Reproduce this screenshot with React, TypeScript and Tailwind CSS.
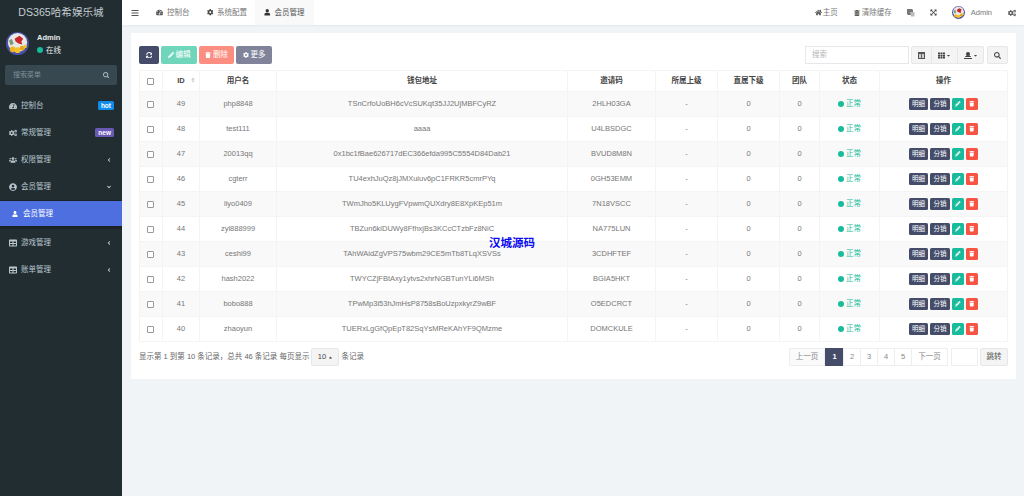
import {
  FaAngleDown,
  FaAngleLeft,
  FaBars,
  FaCaretDown,
  FaCaretUp,
  FaCog,
  FaCogs,
  FaExpandArrowsAlt,
  FaHome,
  FaPencilAlt,
  FaSearch,
  FaSort,
  FaSyncAlt,
  FaTable,
  FaTachometerAlt,
  FaTh,
  FaTrash,
  FaTrashAlt,
  FaUser,
  FaUserCircle,
  FaUsers,
} from 'react-icons/fa';

const font = "font-['Liberation_Sans','Noto_Sans_CJK_SC',sans-serif]";

const members = [
  { id: 49, name: 'php8848', wallet: 'TSnCrfoUoBH6cVcSUKqt35JJ2UjMBFCyRZ', code: '2HLH03GA' },
  { id: 48, name: 'test111', wallet: 'aaaa', code: 'U4LBSDGC' },
  { id: 47, name: '20013qq', wallet: '0x1bc1fBae626717dEC366efda995C5554D84Dab21', code: 'BVUD8M8N' },
  { id: 46, name: 'cgterr', wallet: 'TU4exhJuQz8jJMXuiuv6pC1FRKR5cmrPYq', code: '0GH53EMM' },
  { id: 45, name: 'liyo0409', wallet: 'TWmJho5KLUygFVpwmQUXdry8E8XpKEp51m', code: '7N18VSCC' },
  { id: 44, name: 'zyl888999', wallet: 'TBZun6kiDUWy8FfhxjBs3KCcCTzbFz8NiC', code: 'NA775LUN' },
  { id: 43, name: 'ceshi99', wallet: 'TAhWAidZgVPS75wbm29CE5mTb8TLqXSVSs', code: '3CDHFTEF' },
  { id: 42, name: 'hash2022', wallet: 'TWYCZjFBtAxy1ytvs2xhrNGBTunYLi6MSh', code: 'BGIA5HKT' },
  { id: 41, name: 'bobo888', wallet: 'TPwMp3i53hJmHsP8758sBoUzpxkyrZ9wBF', code: 'O5EDCRCT' },
  { id: 40, name: 'zhaoyun', wallet: 'TUERxLgGfQpEpT82SqYsMReKAhYF9QMzme', code: 'DOMCKULE' },
];

const columns = [
  { label: '用户名', w: 'w-[77px]' },
  { label: '钱包地址', w: 'w-[291px]' },
  { label: '邀请码', w: 'w-[88px]' },
  { label: '所属上级', w: 'w-[62px]' },
  { label: '直属下级', w: 'w-[62px]' },
  { label: '团队', w: 'w-[40px]' },
  { label: '状态', w: 'w-[60px]' },
  { label: '操作', w: 'w-[128px]' },
];

function Avatar({ size }: { size: string }) {
  return (
    <svg viewBox="0 0 24 24" className={size}>
      <circle cx="12" cy="12" r="12" fill="#4a4fa8" />
      <circle cx="12" cy="11" r="10" fill="#e9e9e4" />
      <path d="M9 7l5-3 4 3-2 3 1 3-4-1-3-2z" fill="#c9252b" />
      <path d="M3 9l3-2 2 5-3 2z" fill="#7b9a78" />
      <circle cx="7" cy="18" r="3" fill="#efb71f" />
      <circle cx="12" cy="19" r="3" fill="#f3c22d" />
      <circle cx="17" cy="17" r="2.6" fill="#e8a916" />
      <circle cx="20" cy="15" r="1.8" fill="#f3c22d" />
    </svg>
  );
}

function SideItem({ icon, label, badge, arrow }: { icon: React.ReactNode; label: string; badge?: React.ReactNode; arrow?: React.ReactNode }) {
  return (
    <div className="flex h-[27px] items-center pl-[9px] pr-[8px] text-[7.5px] text-[#b8c7ce]">
      <span className="flex w-[12px] text-[8px]">{icon}</span>
      <span className="flex-1">{label}</span>
      {badge}
      {arrow}
    </div>
  );
}

function Sidebar() {
  return (
    <aside className="flex w-[122px] shrink-0 flex-col bg-[#222d32]">
      <div className="flex h-[25px] items-center justify-center text-[10.6px] text-[#c4ccd0]">DS365哈希娱乐城</div>
      <div className="flex h-[36px] items-center pl-[6px] pt-[1px]">
        <Avatar size="h-[23px] w-[23px]" />
        <div className="ml-[8px] flex flex-col gap-[4px] text-[7.5px] leading-[9px] text-[#e8eef0]">
          <span className="font-bold">Admin</span>
          <span className="flex items-center gap-[3px]">
            <span className="h-[6px] w-[6px] rounded-full bg-[#18bc9c]" />
            在线
          </span>
        </div>
      </div>
      <div className="mx-[5px] mt-[4px] flex h-[20px] items-center justify-between rounded-[2px] bg-[#374850] pl-[8px] pr-[8px] text-[7px] text-[#7f8f97]">
        搜索菜单
        <FaSearch className="text-[6.5px] text-[#a9b4b9]" />
      </div>
      <div className="mt-[7px]">
        <SideItem
          icon={<FaTachometerAlt />}
          label="控制台"
          badge={<span className="flex h-[9px] items-center rounded-[1.5px] bg-[#0f8bea] px-[3px] text-[6.5px] font-bold text-white">hot</span>}
        />
        <SideItem
          icon={<FaCogs />}
          label="常规管理"
          badge={<span className="flex h-[9px] items-center rounded-[1.5px] bg-[#6a59b5] px-[3px] text-[6.5px] font-bold text-white">new</span>}
        />
        <SideItem icon={<FaUsers />} label="权限管理" arrow={<FaAngleLeft className="mr-[2px] text-[6px]" />} />
        <SideItem icon={<FaUserCircle />} label="会员管理" arrow={<FaAngleDown className="mr-[2px] text-[6px]" />} />
        <div className="bg-[#1a2226] pb-[3px] pt-[1px]">
          <div className="flex h-[25px] items-center bg-[#4e6fe0] pl-[12px] text-[7.5px] text-white">
            <FaUser className="mr-[5px] text-[6px]" />
            会员管理
          </div>
        </div>
        <SideItem icon={<FaTable />} label="游戏管理" arrow={<FaAngleLeft className="mr-[2px] text-[6px]" />} />
        <SideItem icon={<FaTable />} label="账单管理" arrow={<FaAngleLeft className="mr-[2px] text-[6px]" />} />
      </div>
    </aside>
  );
}

function TopBar() {
  return (
    <header className="flex h-[25px] shrink-0 items-center bg-white pl-[9px] pr-[8px] text-[7.5px] text-[#777] shadow-[0_1px_2px_rgba(0,0,0,0.05)]">
      <FaBars className="text-[8px] text-[#555]" />
      <div className="ml-[10px] flex h-full items-center">
        <div className="flex h-full items-center gap-[4px] px-[7px]">
          <FaTachometerAlt className="text-[7px] text-[#555]" /> 控制台
        </div>
        <div className="ml-[1px] flex h-full items-center gap-[4px] pl-[9px] pr-[8px]">
          <FaCog className="text-[6.5px] text-[#444]" /> 系统配置
        </div>
        <div className="flex h-full items-center gap-[4px] bg-[#f9f9f9] px-[9px] text-[#555]">
          <FaUser className="text-[6.5px] text-[#333]" /> 会员管理
        </div>
      </div>
      <div className="ml-auto flex items-center">
        <FaHome className="text-[7px] text-[#555]" />
        <span className="ml-[1px]">主页</span>
        <FaTrashAlt className="ml-[16px] text-[6px] text-[#555]" />
        <span className="ml-[2px]">清除缓存</span>
        <svg viewBox="0 0 8 8" className="ml-[15px] h-[8px] w-[8px]">
          <path d="M0 0h5l1 1v5H1L0 5z" fill="#777" />
          <path d="M3 3h4.5v4.5H4z" fill="#bbb" />
        </svg>
        <FaExpandArrowsAlt className="ml-[15px] text-[7px] text-[#444]" />
        <Avatar size="ml-[15px] h-[13px] w-[13px]" />
        <span className="ml-[6px]">Admin</span>
        <FaCogs className="ml-[16px] text-[8px] text-[#555]" />
      </div>
    </header>
  );
}

function Toolbar() {
  return (
    <div className="flex h-[18px] items-center text-[7.5px] text-white">
      <div className="flex h-full w-[20px] items-center justify-center rounded-[2px] bg-[#444c69]">
        <FaSyncAlt className="text-[6.5px]" />
      </div>
      <div className="ml-[2px] flex h-full w-[36px] items-center justify-center gap-[2px] rounded-[2px] bg-[#6fd6bc]">
        <FaPencilAlt className="text-[6px]" /> 编辑
      </div>
      <div className="ml-[2px] flex h-full w-[35px] items-center justify-center gap-[2px] rounded-[2px] bg-[#fc8d81]">
        <FaTrash className="text-[6px]" /> 删除
      </div>
      <div className="ml-[2px] flex h-full w-[36px] items-center justify-center gap-[2px] rounded-[2px] bg-[#7f849b]">
        <FaCog className="text-[6px]" /> 更多
      </div>
      <div className="ml-auto flex h-full w-[104px] items-center border border-[#e4e8ea] pl-[6px] text-[#b5b5b5]">搜索</div>
      <div className="ml-[2px] flex h-full items-center rounded-[2px] border border-[#e7e7e7] bg-[#f4f4f4] text-[#444]">
        <span className="flex h-full w-[20px] items-center justify-center border-r border-[#e7e7e7]">
          <svg viewBox="0 0 7 7" className="h-[7px] w-[7px]">
            <path d="M0 0h7v7H0z" fill="#555" />
            <path d="M1 2h5v4H1z" fill="#ccc" />
            <path d="M3 2h1v4H3z" fill="#666" />
          </svg>
        </span>
        <span className="flex h-full w-[26px] items-center justify-center gap-[1px] border-r border-[#e7e7e7]">
          <FaTh className="text-[7px]" />
          <FaCaretDown className="text-[5px]" />
        </span>
        <span className="flex h-full w-[25px] items-center justify-center gap-[1px]">
          <svg viewBox="0 0 8 7" className="h-[7px] w-[8px]">
            <circle cx="4" cy="2" r="2" fill="#444" />
            <path d="M1 5c0-1 1-1.5 3-1.5S7 4 7 5z" fill="#444" />
            <path d="M0 6h8v1H0z" fill="#444" />
          </svg>
          <FaCaretDown className="text-[5px]" />
        </span>
      </div>
      <div className="ml-[3px] flex h-full w-[21px] items-center justify-center rounded-[2px] border border-[#e7e7e7] bg-[#f4f4f4] text-[#444]">
        <FaSearch className="text-[7px]" />
      </div>
    </div>
  );
}

function MemberTable() {
  return (
    <table className="mt-[6px] w-[869px] table-fixed border-collapse text-center text-[7.5px] text-[#777]">
      <thead>
        <tr className="h-[21px] border-b border-b-[#e0e3e6] font-bold text-[#444]">
          <th className="w-[23px] border border-[#f4f4f4]">
            <span className="ml-[7px] block h-[7px] w-[7px] rounded-[1px] border border-[#999] bg-white" />
          </th>
          <th className="w-[37px] border border-[#f4f4f4]">
            <span className="relative">
              ID
              <FaSort className="absolute -right-[11px] top-[1px] text-[6px] text-[#ccc]" />
            </span>
          </th>
          {columns.map((c) => (
            <th key={c.label} className={`${c.w} border border-[#f4f4f4]`}>
              {c.label}
            </th>
          ))}
        </tr>
      </thead>
      <tbody>
        {members.map((m, i) => (
          <tr key={m.id} className={`h-[25px] ${i % 2 === 0 ? 'bg-[#f9f9f9]' : 'bg-white'}`}>
            <td className="border border-[#f4f4f4]">
              <span className="ml-[7px] block h-[7px] w-[7px] rounded-[1px] border border-[#999] bg-white" />
            </td>
            <td className="border border-[#f4f4f4]">{m.id}</td>
            <td className="border border-[#f4f4f4]">{m.name}</td>
            <td className="border border-[#f4f4f4]">{m.wallet}</td>
            <td className="border border-[#f4f4f4]">{m.code}</td>
            <td className="border border-[#f4f4f4]">-</td>
            <td className="border border-[#f4f4f4]">0</td>
            <td className="border border-[#f4f4f4]">0</td>
            <td className="border border-[#f4f4f4]">
              <span className="flex items-center justify-center gap-[2px] text-[#18bc9c]">
                <span className="h-[6px] w-[6px] rounded-full bg-[#18bc9c]" />
                正常
              </span>
            </td>
            <td className="border border-[#f4f4f4]">
              <div className="flex justify-center gap-[2px] text-[6.5px] text-white">
                <span className="flex h-[12px] w-[19px] items-center justify-center rounded-[1.5px] bg-[#444c69]">明细</span>
                <span className="flex h-[12px] w-[20px] items-center justify-center rounded-[1.5px] bg-[#444c69]">分销</span>
                <span className="flex h-[12px] w-[12px] items-center justify-center rounded-[1.5px] bg-[#18bc9c]">
                  <FaPencilAlt className="text-[5.5px]" />
                </span>
                <span className="flex h-[12px] w-[12px] items-center justify-center rounded-[1.5px] bg-[#f75444]">
                  <FaTrash className="text-[5.5px]" />
                </span>
              </div>
            </td>
          </tr>
        ))}
      </tbody>
    </table>
  );
}

function Pager() {
  const pageBox = 'flex h-full items-center justify-center border border-[#eee] bg-white -ml-[1px]';
  return (
    <div className="mt-[6px] flex h-[18px] items-center text-[7.5px] text-[#666]">
      <span>显示第 1 到第 10 条记录，总共 46 条记录 每页显示</span>
      <span className="ml-[2px] flex h-full w-[28px] items-center justify-center gap-[2px] rounded-[2px] border border-[#e7e7e7] bg-[#f4f4f4] text-[#444]">
        10 <FaCaretUp className="text-[5px]" />
      </span>
      <span className="ml-[2px]">条记录</span>
      <div className="ml-auto flex h-full items-center text-[#888]">
        <span className="flex h-full w-[36px] items-center justify-center border border-[#eee] bg-[#fafafa]">上一页</span>
        <span className="flex h-full w-[19px] items-center justify-center bg-[#444c69] font-bold text-white">1</span>
        {[2, 3, 4, 5].map((p) => (
          <span key={p} className={`${pageBox} w-[18px]`}>
            {p}
          </span>
        ))}
        <span className={`${pageBox} w-[37px]`}>下一页</span>
        <span className="ml-[3px] h-full w-[27px] border border-[#eee] bg-white" />
        <span className="ml-[2px] flex h-full w-[28px] items-center justify-center rounded-[2px] border border-[#e7e7e7] bg-[#f4f4f4] text-[#555]">跳转</span>
      </div>
    </div>
  );
}

export default function App() {
  return (
    <div className={`${font} relative flex h-[496px] w-[1024px] overflow-hidden bg-[#f1f4f6]`}>
      <Sidebar />
      <main className="flex min-w-0 flex-1 flex-col">
        <TopBar />
        <section className="mb-auto ml-[9px] mr-[8px] mt-[8px] h-[346px] bg-white px-[8px] pt-[13px]">
          <Toolbar />
          <MemberTable />
          <Pager />
        </section>
      </main>
      <span className="absolute left-[489px] top-[236px] text-[11.5px] font-bold leading-[14px] text-[#0a0af0] [text-shadow:0_0_2px_#fff]">汉城源码</span>
    </div>
  );
}
